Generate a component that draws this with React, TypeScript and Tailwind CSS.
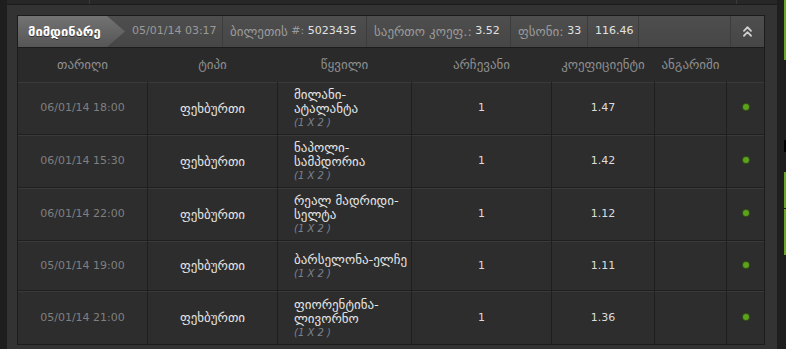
import React from 'react';
import { ChevronsUp } from 'lucide-react';

interface Bet {
  date: string;
  sport: string;
  match: string[];
  pick: string;
  odds: string;
  height: string;
}

const bets: Bet[] = [
  { date: '06/01/14 18:00', sport: 'ფეხბურთი', match: ['მილანი-', 'ატალანტა'], pick: '1', odds: '1.47', height: 'h-[52px]' },
  { date: '06/01/14 15:30', sport: 'ფეხბურთი', match: ['ნაპოლი-', 'სამპდორია'], pick: '1', odds: '1.42', height: 'h-[52px]' },
  { date: '06/01/14 22:00', sport: 'ფეხბურთი', match: ['რეალ მადრიდი-', 'სელტა'], pick: '1', odds: '1.12', height: 'h-[52px]' },
  { date: '05/01/14 19:00', sport: 'ფეხბურთი', match: ['ბარსელონა-ელჩე'], pick: '1', odds: '1.11', height: 'h-[49px]' },
  { date: '05/01/14 21:00', sport: 'ფეხბურთი', match: ['ფიორენტინა-', 'ლივორნო'], pick: '1', odds: '1.36', height: 'h-[53px]' },
];

const cols = 'grid grid-cols-[129px_129px_133px_139px_102px_71px_37px] gap-px';
const cell = 'bg-[#2d2d2d] border-t border-[#3a3a3a] flex items-center justify-center';

// georgian glyphs sit larger than the digits in the original
const Ka = ({ children, className = '' }: { children: React.ReactNode; className?: string }) => (
  <span className={`text-[13px] ${className}`}>{children}</span>
);

export default function App() {
  return (
    <div className="w-[786px] h-[349px] flex bg-[#333] overflow-hidden text-[11px] font-['DejaVu_Sans',sans-serif]">
      <div className="w-[7px] h-full bg-[#1e1e1e]" />

      <div className="w-[770px] h-full flex flex-col">
        <div className="h-[5px] flex bg-[#272727] border-b border-[#1c1c1c]">
          <div className="w-[83px] border-r border-[#3a3a3a]" />
          <div className="w-[647px] border-r border-[#3a3a3a]" />
        </div>

        <div className="ml-[10px] mt-[10px] w-[748px] border border-[#1c1c1c] flex flex-col">
          {/* summary bar */}
          <div className="h-[32px] flex items-stretch bg-gradient-to-b from-[#4e4e4e] to-[#464646] border-b border-[#1c1c1c]">
            <div className="w-[107px] shrink-0 flex items-center pl-[10px] bg-gradient-to-b from-[#737373] to-[#565656] [clip-path:polygon(0_0,calc(100%-18px)_0,100%_50%,calc(100%-18px)_100%,0_100%)]">
              <Ka className="font-bold text-white [text-shadow:0_1px_0_#333]">მიმდინარე</Ka>
            </div>
            <div className="w-[98px] flex items-center pl-[7px] border-r border-[#3c3c3c] text-[#9a9a9a]">
              05/01/14 03:17
            </div>
            <div className="w-[144px] flex items-center pl-[7px] border-r border-[#3c3c3c] text-[#9a9a9a]">
              <Ka>ბილეთის</Ka>&nbsp;#:&nbsp;<span className="text-[#e2e2e2]">5023435</span>
            </div>
            <div className="w-[144px] flex items-center pl-[7px] border-r border-[#3c3c3c] text-[#9a9a9a]">
              <Ka>საერთო კოეფ.:</Ka>&nbsp;<span className="text-[#e2e2e2]">3.52</span>
            </div>
            <div className="w-[77px] flex items-center pl-[7px] border-r border-[#3c3c3c] text-[#9a9a9a]">
              <Ka>ფსონი:</Ka>&nbsp;<span className="text-[#e2e2e2]">33</span>
            </div>
            <div className="w-[51px] flex items-center pl-[7px] border-r border-[#3c3c3c] text-[#e2e2e2]">
              116.46
            </div>
            <div className="flex-1 border-r border-[#3c3c3c]" />
            <button className="w-[33px] flex items-center justify-center text-[#cfcfcf]">
              <ChevronsUp size={17} strokeWidth={2.5} />
            </button>
          </div>

          {/* column titles */}
          <div className={`${cols} h-[34px] bg-[#2a2a2a] text-[#8e8e8e]`}>
            <div className="flex items-center justify-center"><Ka>თარიღი</Ka></div>
            <div className="flex items-center justify-center"><Ka>ტიპი</Ka></div>
            <div className="flex items-center justify-center"><Ka>წყვილი</Ka></div>
            <div className="flex items-center justify-center"><Ka>არჩევანი</Ka></div>
            <div className="flex items-center justify-center"><Ka>კოეფიციენტი</Ka></div>
            <div className="flex items-center justify-center"><Ka>ანგარიში</Ka></div>
            <div />
          </div>

          {/* bets */}
          <div className="flex flex-col gap-px bg-[#1f1f1f]">
            {bets.map((b, i) => (
              <div key={i} className={`${cols} ${b.height}`}>
                <div className={`${cell} text-[#7f7f7f]`}>{b.date}</div>
                <div className={`${cell} text-[#e4e4e4]`}><Ka>{b.sport}</Ka></div>
                <div className={`${cell} !justify-start pl-[16px] whitespace-nowrap`}>
                  <div className="flex flex-col">
                    {b.match.map(l => <Ka key={l} className="text-[#e4e4e4] leading-[14px]">{l}</Ka>)}
                    <span className="italic text-[10px] leading-[13px] text-[#7a8290]">(1 X 2 )</span>
                  </div>
                </div>
                <div className={`${cell} text-[#dcdcdc]`}>{b.pick}</div>
                <div className={`${cell} text-[#dcdcdc]`}>{b.odds}</div>
                <div className={cell} />
                <div className={cell}>
                  <span className="w-[6px] h-[6px] rounded-full bg-[#5ea11e] shadow-[0_0_0_1px_#2f4f15] -mt-[3px]" />
                </div>
              </div>
            ))}
          </div>
        </div>
      </div>

      <div className="w-[7px] h-full bg-[#1e1e1e]" />
      <div className="w-[2px] h-full flex flex-col bg-[#1e1e1e]">
        <div className="h-[60px] bg-[#6aa52a]" />
        <div className="h-[80px]" />
        <div className="h-[12px] bg-black" />
        <div className="h-[20px]" />
        <div className="h-[36px] bg-[#6aa52a]" />
        <div className="h-px" />
        <div className="h-[46px] bg-[#6aa52a]" />
      </div>
    </div>
  );
}
